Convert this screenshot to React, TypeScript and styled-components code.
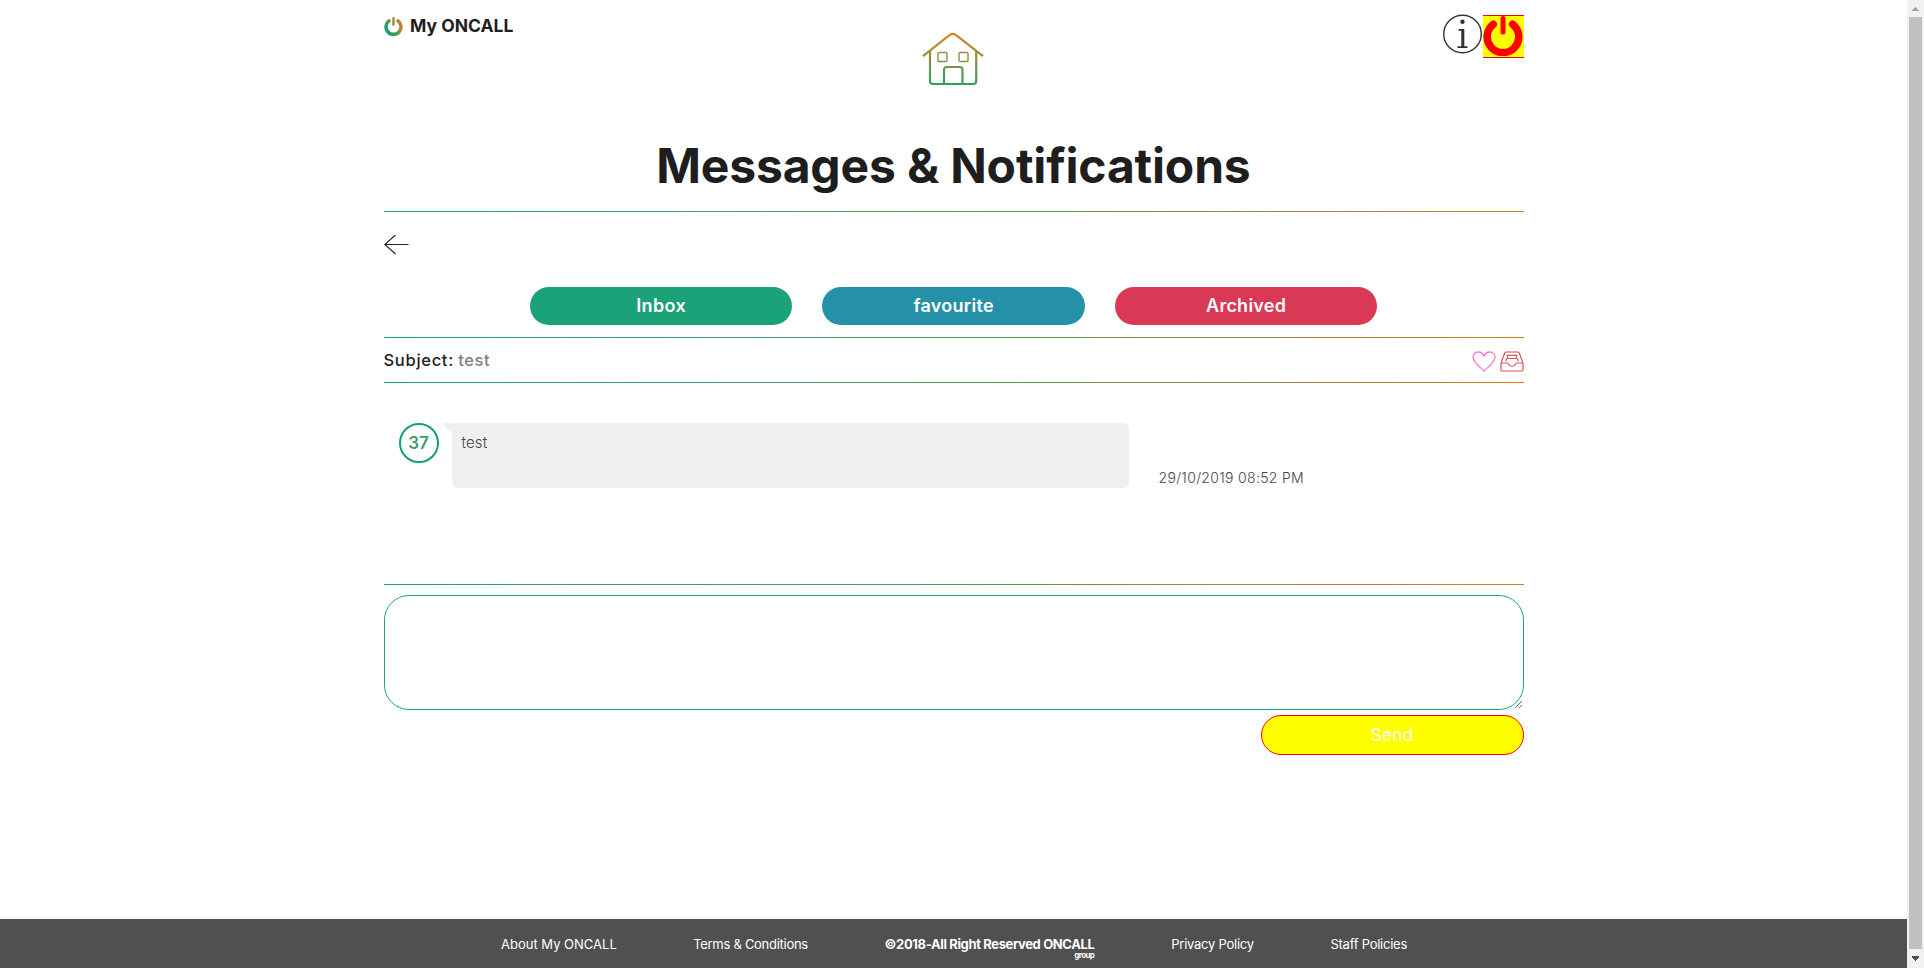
import React from 'react';
import styled, { createGlobalStyle, css } from 'styled-components';

const GlobalStyle = createGlobalStyle`
  *, *::before, *::after { box-sizing: border-box; }
  html, body { margin: 0; padding: 0; height: 968px; overflow: hidden; background: #fff; }
  body { font-family: Inter, "Liberation Sans", sans-serif; color: #1e1e1e; }
`;

const Window = styled.div`
  display: grid;
  grid-template-columns: 1fr 17px;
  width: 100%;
  height: 968px;
`;

const Page = styled.div`
  display: flex;
  flex-direction: column;
  height: 968px;
`;

const Container = styled.main`
  width: 1140px;
  margin: 0 auto;
  flex: 1;
`;

const Header = styled.header`
  display: grid;
  grid-template-columns: 1fr 63px 1fr;
  height: 137px;
`;

const Brand = styled.div`
  display: flex;
  align-items: center;
  gap: 7px;
  height: 22px;
  margin-top: 15px;
  padding-left: 0.5px;
`;

const Word = styled.span<{ $ls?: number }>`
  letter-spacing: ${(p) => p.$ls ?? 0}px;
  margin-right: ${(p) => -(p.$ls ?? 0)}px;
  white-space: nowrap;
`;

const BrandName = styled(Word)`
  font-size: 17.5px;
  font-weight: 700;
  line-height: 22px;
`;

const HomeLink = styled.a`
  display: block;
  margin-top: 32px;
  height: 54px;
`;

const Tools = styled.div`
  display: flex;
  justify-content: flex-end;
  align-items: flex-start;
  padding-top: 14px;
`;

const InfoButton = styled.a`
  display: block;
  width: 40px;
  height: 40px;
`;

const PowerButton = styled.a`
  display: flex;
  justify-content: flex-start;
  width: 41px;
  height: 43px;
  margin-top: 1px;
  background: #ff0;
  border: solid #f00;
  border-width: 1px 0;
`;

const Title = styled.h1`
  margin: 0;
  height: 74px;
  font-size: 48px;
  font-weight: 700;
  line-height: 58px;
  text-align: center;
`;

const Rule = styled.div`
  height: 1px;
  background: linear-gradient(to right, #1ca278, #4b9a5e 50%, #dd7a1c);
`;

const BackRow = styled.div`
  height: 75px;
  padding-top: 22px;
`;

const Tabs = styled.nav`
  display: grid;
  grid-template-columns: repeat(3, 262.5px);
  column-gap: 30px;
  justify-content: center;
  height: 50px;
`;

const pill = css`
  display: flex;
  align-items: center;
  justify-content: center;
  border-radius: 20px;
  color: #fff;
  font-size: 17.5px;
`;

const Tab = styled.a<{ $bg: string }>`
  ${pill}
  height: 38px;
  padding-bottom: 2px;
  background: ${(p) => p.$bg};
  font-size: 18px;
  font-weight: 600;
`;

const SubjectRow = styled.div`
  display: flex;
  align-items: center;
  justify-content: space-between;
  height: 44px;
`;

const Subject = styled.div`
  display: flex;
  gap: 5px;
  font-size: 16.5px;
  font-weight: 500;
`;

const Muted = styled(Word)`
  color: #808080;
`;

const Actions = styled.div`
  display: flex;
  gap: 4px;
  padding-top: 2px;
`;

const Thread = styled.section`
  display: flex;
  align-items: flex-start;
  height: 201px;
  padding: 40px 0 0 15px;
`;

const Avatar = styled.div`
  display: flex;
  align-items: center;
  justify-content: center;
  width: 40px;
  height: 40px;
  border: 2px solid #12a176;
  border-radius: 50%;
  color: #3b9c6c;
  font-size: 17px;
  font-weight: 600;
`;

const Tail = styled.div`
  width: 10px;
  height: 10px;
  margin-left: 3px;
  background: #efefef;
  clip-path: polygon(0 0, 100% 0, 100% 100%);
`;

const Bubble = styled.div`
  width: 677px;
  height: 65px;
  padding: 9px 10px;
  border-radius: 0 5px 5px 5px;
  background: #efefef;
  color: #444;
  font-size: 15px;
  font-weight: 300;
  line-height: 22px;
`;

const Stamp = styled.time`
  margin: 45px 0 0 30px;
  color: #444;
  font-size: 14px;
  font-weight: 300;
  line-height: 20px;
`;

const Reply = styled.textarea`
  display: block;
  width: 1140px;
  height: 115px;
  margin-top: 10px;
  padding: 10px 20px;
  border: 1px solid #1ca278;
  border-radius: 25px;
  background: #fff;
  outline: none;
  resize: both;
`;

const SendButton = styled.button`
  ${pill}
  width: 263px;
  height: 40px;
  margin: 5px 0 0 auto;
  padding: 0 0 1px;
  border: 1px solid #f00;
  background: #ff0;
  font-family: inherit;
  font-weight: 400;
`;

const Footer = styled.footer`
  display: flex;
  gap: 76.4px;
  height: 49px;
  padding: 15px 0 0 501px;
  background: #505050;
  color: #fff;
  font-size: 13px;
  line-height: 20px;
`;

const Copyright = styled.div`
  display: flex;
  flex-direction: column;
  align-items: flex-end;
  font-weight: 700;
`;

const Group = styled(Word)`
  margin-top: -4px;
  font-size: 8px;
  line-height: 10px;
`;

const Scrollbar = styled.div`
  display: flex;
  flex-direction: column;
  align-items: center;
  background: #f1f1f1;
`;

const Thumb = styled.div`
  width: 13px;
  height: 932px;
  background: #c1c1c1;
`;

const ScrollArrow = ({ d, color }: { d: string; color: string }) => (
  <svg width="17" height="17" viewBox="0 0 17 17" fill={color} shapeRendering="crispEdges">
    <path d={d} />
  </svg>
);

const PowerGlyph = ({ size, color }: { size: number; color: string }) => (
  <svg width={size} height={size} viewBox="0 0 40 40" fill="none" stroke={color} strokeLinecap="round">
    <defs>
      <linearGradient id="brand" x1="8" y1="30" x2="36" y2="10" gradientUnits="userSpaceOnUse">
        <stop offset="0" stopColor="#12a176" />
        <stop offset="1" stopColor="#e57c1c" />
      </linearGradient>
    </defs>
    <path d="M10.400 8.200A15.800 15.800 0 1 0 29.600 8.200" strokeWidth="7.500" />
    <path d="M20 2.500V16" strokeWidth="5" />
  </svg>
);

const HouseIcon = () => (
  <svg width="62" height="54" viewBox="0 0 62 54" fill="none" stroke="url(#house)" strokeWidth="2.200">
    <defs>
      <linearGradient id="house" x1="0" y1="0" x2="0" y2="54" gradientUnits="userSpaceOnUse">
        <stop offset="0" stopColor="#e08428" />
        <stop offset="0.5" stopColor="#8c8f43" />
        <stop offset="1" stopColor="#27a266" />
      </linearGradient>
    </defs>
    <path d="M1 24.200 27.800 3Q30.800.8 33.800 3L61 24.200" />
    <path d="M8 19V49Q8 52 11 52H51.200Q54.200 52 54.200 49V19" />
    <path d="M22 52V38Q22 35 25 35H37.500Q40.500 35 40.500 38V52" />
    <rect x="16" y="20.500" width="9" height="9" rx="1" strokeWidth="1.400" />
    <rect x="37" y="20.500" width="9" height="9" rx="1" strokeWidth="1.400" />
  </svg>
);

const InfoIcon = () => (
  <svg width="40" height="40" viewBox="0 0 40 40" fill="none" stroke="#333">
    <circle cx="19.500" cy="20" r="18.800" strokeWidth="1.400" />
    <circle cx="19.500" cy="7.700" r="2.200" fill="#333" stroke="none" />
    <path d="M15.500 15.800H19.500M14.500 33.200H24.500" strokeWidth="1.800" />
    <path d="M19.800 15V33.500" strokeWidth="3" />
  </svg>
);

const HeartIcon = () => (
  <svg width="24" height="21" viewBox="0 0 24 21" fill="none" stroke="#f779d4" strokeWidth="1.300">
    <path d="M12 20C8 16.300 1 11 1 6.300C1 3 3.400 1 6.200 1C8.800 1 11 2.500 12 5C13 2.500 15.200 1 17.800 1C20.600 1 23 3 23 6.300C23 11 16 16.300 12 20Z" />
  </svg>
);

const TrayIcon = () => (
  <svg width="24" height="21" viewBox="0 0 24 21" fill="none" stroke="#d9505f" strokeWidth="1.200">
    <path d="M1 12 4.800 1.800Q5.200 1 6 1H18Q18.800 1 19.200 1.800L23 12V18.500Q23 20 21.500 20H2.500Q1 20 1 18.500Z" />
    <path d="M1 12H7.500C8.300 12 8.300 15.500 12 15.500C15.700 15.500 15.700 12 16.500 12H23" />
    <path d="M5.500 10 7 7.500H17L18.500 10M7.500 7.500V4.300H16.500V7.500" />
  </svg>
);

export default function App() {
  return (
    <>
      <GlobalStyle />
      <Window>
        <Page>
          <Container>
            <Header>
              <Brand>
                <PowerGlyph size={19} color="url(#brand)" />
                <BrandName>My ONCALL</BrandName>
              </Brand>
              <HomeLink>
                <HouseIcon />
              </HomeLink>
              <Tools>
                <InfoButton>
                  <InfoIcon />
                </InfoButton>
                <PowerButton>
                  <PowerGlyph size={40} color="#f00" />
                </PowerButton>
              </Tools>
            </Header>
            <Title>
              <Word $ls={-0.16}>Messages &amp; Notifications</Word>
            </Title>
            <Rule />
            <BackRow>
              <svg width="25" height="21" viewBox="0 0 25 21" fill="none" stroke="#222" strokeWidth="1.100">
                <path d="M24.500 10.500H.8M11.500 1 .8 10.500 11.500 20" />
              </svg>
            </BackRow>
            <Tabs>
              <Tab $bg="#1ca278"><Word $ls={0.4}>Inbox</Word></Tab>
              <Tab $bg="#2591a8"><Word $ls={0.3}>favourite</Word></Tab>
              <Tab $bg="#da3955"><Word $ls={0.25}>Archived</Word></Tab>
            </Tabs>
            <Rule />
            <SubjectRow>
              <Subject>
                <Word $ls={0.7}>Subject:</Word>
                <Muted $ls={0.6}>test</Muted>
              </Subject>
              <Actions>
                <HeartIcon />
                <TrayIcon />
              </Actions>
            </SubjectRow>
            <Rule />
            <Thread>
              <Avatar>37</Avatar>
              <Tail />
              <Bubble><Word $ls={0.15}>test</Word></Bubble>
              <Stamp><Word $ls={0.32}>29/10/2019 08:52 PM</Word></Stamp>
            </Thread>
            <Rule />
            <Reply />
            <SendButton>Send</SendButton>
          </Container>
          <Footer>
            <Word>About My ONCALL</Word>
            <Word $ls={-0.28}>Terms &amp; Conditions</Word>
            <Copyright>
              <Word $ls={-0.37}>©2018-All Right Reserved ONCALL</Word>
              <Group $ls={-0.6}>group</Group>
            </Copyright>
            <Word $ls={-0.25}>Privacy Policy</Word>
            <Word $ls={-0.25}>Staff Policies</Word>
          </Footer>
        </Page>
        <Scrollbar>
          <ScrollArrow d="M8 7H9V8H10V9H11V10H12V11H5V10H6V9H7V8H8Z" color="#a3a3a3" />
          <Thumb />
          <ScrollArrow d="M5 7H12V9H11V10H10V11H9V12H8V11H7V10H6V9H5Z" color="#505050" />
        </Scrollbar>
      </Window>
    </>
  );
}
